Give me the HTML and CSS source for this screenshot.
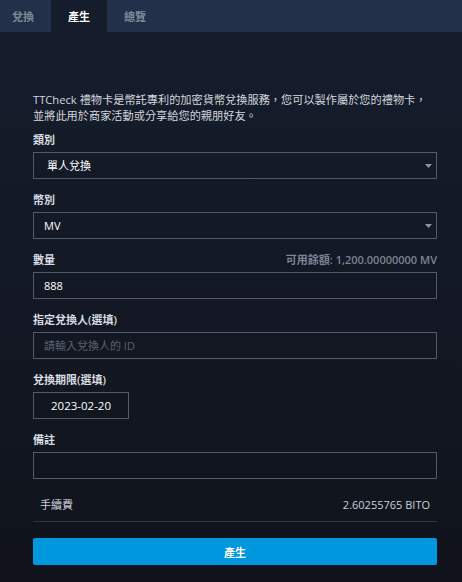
FILE: index.html
```html
<!DOCTYPE html>
<html>
<head>
  <title>TTCheck</title>
  <link rel="stylesheet" href="styles.css">
</head>

<body>
  <div class="tabbar">
    <div class="tab first">兌換</div>
    <div class="tab active">產生</div>
    <div class="tab">總覽</div>
  </div>

  <div class="panel">
    <p class="intro">TTCheck 禮物卡是幣託專利的加密貨幣兌換服務，您可以製作屬於您的禮物卡，<br>並將此用於商家活動或分享給您的親朋好友。</p>

    <form id="createForm">
      <div class="field">
        <label>類別</label>
        <div class="select-wrap">
          <select class="control select-wide" name="type">
            <option>單人兌換</option>
            <option>多人兌換</option>
          </select>
          <svg class="caret" width="7" height="4" viewBox="0 0 7 4"><path d="M0 0h7L3.5 4z" fill="#8c95a5"/></svg>
        </div>
      </div>

      <div class="field">
        <label>幣別</label>
        <div class="select-wrap">
          <select class="control" name="currency">
            <option>MV</option>
            <option>BITO</option>
          </select>
          <svg class="caret" width="7" height="4" viewBox="0 0 7 4"><path d="M0 0h7L3.5 4z" fill="#8c95a5"/></svg>
        </div>
      </div>

      <div class="field">
        <div class="label-row">
          <label>數量</label>
          <span class="balance">可用餘額: 1,200.00000000 MV</span>
        </div>
        <input class="control" type="text" name="amount" value="888" />
      </div>

      <div class="field">
        <label>指定兌換人(選填)</label>
        <input class="control" type="text" name="receiver" placeholder="請輸入兌換人的 ID" />
      </div>

      <div class="field">
        <label>兌換期限(選填)</label>
        <input class="control date" type="text" name="expire" value="2023-02-20" />
      </div>

      <div class="field">
        <label>備註</label>
        <input class="control" type="text" name="note" />
      </div>

      <div class="fee-row">
        <span>手續費</span>
        <span>2.60255765 BITO</span>
      </div>

      <button class="create-button" type="submit">產生</button>
    </form>
  </div>
</body>
</html>
```

FILE: styles.css
```css
body {
  font-family: 'Open Sans', 'Noto Sans CJK TC', sans-serif;
  background: linear-gradient(#151d2d, #10131b);
  color: #d6d9df;
  margin: 0;
  padding: 0;
  min-height: 582px;
}

/* Tabs */
.tabbar {
  display: flex;
  height: 32px;
  background-color: #233049;
}

.tab {
  display: flex;
  align-items: center;
  padding: 0 17px;
  font-size: 11px;
  font-weight: bold;
  color: #7f899b;
}

.tab.first {
  padding-left: 12px;
}

.tab.active {
  background-color: #151c2b;
  color: #fff;
}

.panel {
  padding: 60px 25px 0 33px;
}

.intro {
  margin: 0 0 8px;
  font-size: 11.2px;
  line-height: 16px;
  color: #d4d7dd;
}

.field + .field {
  margin-top: 13px;
}

label,
.label-row {
  display: block;
  font-size: 11px;
  line-height: 16px;
  font-weight: 600;
  color: #d9dce2;
  margin-bottom: 4px;
}

.label-row {
  display: flex;
  justify-content: space-between;
}

.label-row label {
  margin: 0;
}

.balance {
  font-size: 11px;
  font-weight: 600;
  color: #7c8596;
}

.control {
  box-sizing: border-box;
  display: block;
  width: 404px;
  height: 27px;
  padding: 0 10px;
  font-family: inherit;
  font-size: 11px;
  color: #fff;
  background: transparent;
  border: 1px solid #525968;
  border-radius: 0;
  outline: none;
}

.control::placeholder {
  color: #5a616e;
}

.select-wrap {
  position: relative;
}

select.control {
  appearance: none;
  -webkit-appearance: none;
}

select.control option {
  background-color: #151c2b;
}

.select-wide {
  padding-left: 13px;
}

.caret {
  position: absolute;
  right: 5px;
  top: 12px;
  pointer-events: none;
}

.date {
  width: 96px;
  text-align: center;
  padding: 0;
  font-size: 11.5px;
}

.fee-row {
  display: flex;
  justify-content: space-between;
  width: 404px;
  box-sizing: border-box;
  margin-top: 10px;
  padding: 8px 7px;
  font-size: 11px;
  line-height: 16px;
  color: #cdd1d7;
  border-bottom: 1px solid #30353f;
}

.create-button {
  display: block;
  width: 404px;
  height: 27px;
  margin-top: 16px;
  font-family: inherit;
  font-size: 11px;
  font-weight: bold;
  color: #fff;
  background-color: #0097de;
  border: none;
  border-radius: 2px;
  cursor: pointer;
}

.create-button:hover {
  background-color: #0086c6;
}
```
